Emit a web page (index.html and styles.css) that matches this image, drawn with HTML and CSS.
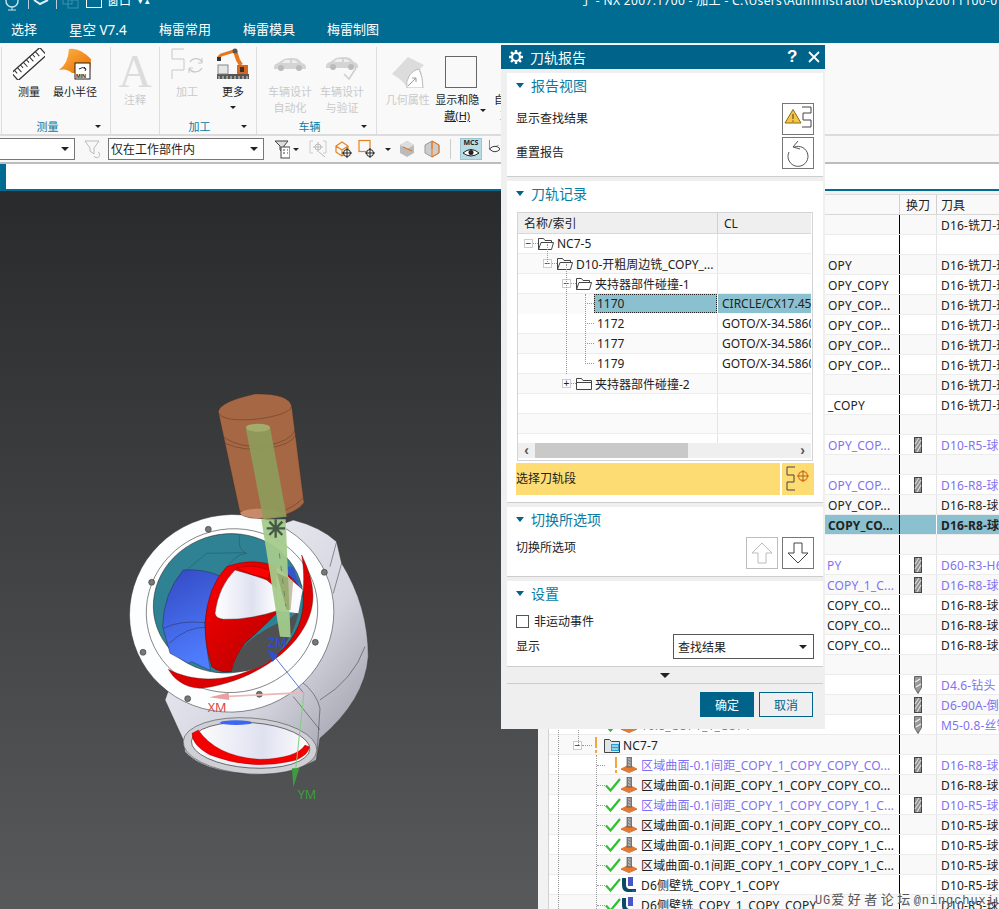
FILE: index.html
```html
<!DOCTYPE html>
<html lang="zh-CN">
<head>
<meta charset="utf-8">
<title>NX 刀轨报告</title>
<link rel="stylesheet" href="styles.css">
</head>
<body>
<svg class="defs" width="0" height="0">
  <defs>
    <symbol id="folder" viewBox="0 0 16 13"><path d="M.5 12.5V1.5h5l1.5 2h8.5v9z" fill="none" stroke="#444"/><path d="M.5 5.5h15" stroke="#444"/></symbol>
    <symbol id="folderopen" viewBox="0 0 16 13"><path d="M.5 12.5V1.5h5l1.5 2h6.5v2M.5 12.5l2.5-7h12.5l-2 7z" fill="none" stroke="#444"/></symbol>
    <symbol id="drill" viewBox="0 0 8 16"><rect x=".5" y=".5" width="7" height="15" fill="#8f8f8f" stroke="#444"/><path d="M1 12 7 3M1 7l4-6M3 15l4-7" stroke="#ddd" stroke-width="1.2"/></symbol>
    <symbol id="twist" viewBox="0 0 8 18"><path d="M.5.5h7v11l-3.500 6-3.500-6z" fill="#999" stroke="#666"/><path d="M1 6l5-3M2 11l5-3" stroke="#eee" stroke-width="1.4"/></symbol>
    <symbol id="op" viewBox="0 0 16 16"><path d="M0 11.500 8 7.500l8 4-8 4z" fill="#e9772c"/><path d="M0 11.500l8 4 8-4v1l-8 3.500-8-3.500z" fill="#a9511c"/><rect x="6" y="0" width="4.500" height="10" fill="#8a8a8a" stroke="#444" stroke-width=".6"/><path d="M7 1.500 9.500 3M7 4.500 9.500 6M7 7.500 9.500 9" stroke="#ddd" stroke-width=".7"/></symbol>
    <symbol id="wall" viewBox="0 0 16 16"><path d="M1 1h4v7q0 3 3 4h7v3H6Q1 14 1 8z" fill="#0b4a66"/><rect x="7" y="0" width="5" height="9" fill="#4a55c8"/><path d="M11 14h4" stroke="#1a6fd0"/></symbol>
    <symbol id="check" viewBox="0 0 16 16"><path d="M1 8.500 5.500 13.500 15 2" fill="none" stroke="#2fbf2f" stroke-width="2.200"/></symbol>
    <symbol id="car" viewBox="0 0 32 14"><path d="M0 10q0-3 4-4l6-4q8-2 14 0l4 4q4 1 4 4v2H0z" fill="#d4d4d4"/><circle cx="7" cy="11" r="3" fill="#bbb"/><circle cx="25" cy="11" r="3" fill="#bbb"/><path d="M11 3h5v3H8zM18 3q4 0 6 3h-6z" fill="#eee"/></symbol>
  </defs>
</svg>

<header class="appbar">
  <div class="qat">
    <svg class="qat-icons" width="110" height="14" viewBox="0 0 110 14"><circle cx="12" cy="1" r="6" fill="none" stroke="#cfe3ea" stroke-width="1.400"/><path d="M12 7v3M8 10h8" stroke="#cfe3ea"/><path d="M28.500 0v9M56.500 0v9" stroke="#bcd"/><path d="M34 0l6 4 8-4" fill="none" stroke="#dfeef3" stroke-width="2"/><rect x="63" y="-5" width="9" height="9" fill="none" stroke="#3f8fae"/><rect x="68" y="0" width="10" height="8" fill="none" stroke="#3f8fae"/><rect x="86.500" y="-4" width="15" height="11.500" fill="none" stroke="#fff"/></svg>
    <span class="qat-text">窗口</span>
    <span class="qat-arrow">▾ ▴</span>
    <span class="doc-title">丁 - NX 2007.1700 - 加工 - C:\Users\Administrator\Desktop\20011100-0</span>
  </div>
  <nav class="tabs">
    <span class="tab t1">选择</span><span class="tab t2">星空 V7.4</span><span class="tab t3">梅雷常用</span><span class="tab t3">梅雷模具</span><span class="tab t3">梅雷制图</span>
  </nav>
</header>

<section class="ribbon">
  <div class="grp g1">
    <div class="tools">
      <div class="tool w46"><svg class="ico" viewBox="0 0 32 32"><g transform="rotate(-42 16 16)"><rect x="-3" y="11" width="38" height="10" fill="#fff" stroke="#333" stroke-width="1.300"/><path d="M1 11v4M5 11v6M9 11v4M13 11v6M17 11v4M21 11v6M25 11v4M29 11v6" stroke="#333"/></g></svg><span>测量</span></div>
      <div class="tool w46"><svg class="ico" viewBox="0 0 32 32"><defs><linearGradient id="srf" x1="0" y1="0" x2="1" y2="1"><stop offset="0" stop-color="#ffb347"/><stop offset="1" stop-color="#e86f00"/></linearGradient></defs><path d="M0 22Q9 16 10 1q10-2 22 10l-1 14H13Q8 20 0 22z" fill="url(#srf)"/><rect x="16" y="15" width="15" height="16" fill="#fff" stroke="#222"/><path d="M20 21q4-3 7 0M25 19l2 2-1 2" fill="none" stroke="#222"/><text class="mintxt" x="17" y="30">MIN</text></svg><span>最小半径</span></div>
    </div>
    <div class="gl"><span>测量</span><i class="caret"></i></div>
  </div>
  <div class="grp g2">
    <div class="tools">
      <div class="tool w49 low"><span class="bigA">A</span><span class="off">注释</span></div>
    </div>
    <div class="gl none"></div>
  </div>
  <div class="grp g3">
    <div class="tools">
      <div class="tool w46 off"><svg class="ico" viewBox="0 0 32 32"><path d="M13 1H1v10h12v11H1v9" fill="none" stroke="#c8c8c8"/><path d="M19 14a7 7 0 0 1 12 0M31 20a8 8 0 0 1-13 1" fill="none" stroke="#c8c8c8" stroke-width="1.400"/><path d="M31 10v5h-4M18 25v-5h4" fill="none" stroke="#c8c8c8"/></svg><span>加工</span></div>
      <div class="tool w46"><svg class="ico" viewBox="0 0 32 32"><rect x="0" y="26" width="32" height="5" fill="#555"/><path d="M2 31v-3M6 31v-3M10 31v-3M14 31v-3M18 31v-3M22 31v-3M26 31v-3M30 31v-3" stroke="#ccc" stroke-width="1.200"/><rect x="1" y="17" width="10" height="9" fill="#e6e6e6" stroke="#888"/><path d="M1 10 4 7 17 3" fill="none" stroke="#e8761c" stroke-width="3"/><path d="M18 3l3 9 3 5" fill="none" stroke="#e8761c" stroke-width="4"/><rect x="20" y="17" width="11" height="9" fill="#d9661a"/><rect x="23" y="19" width="4" height="5" fill="#333"/><rect x="0" y="9" width="4" height="4" fill="#333"/><circle cx="18" cy="3" r="2.500" fill="#555"/></svg><span>更多</span><i class="caret"></i></div>
    </div>
    <div class="gl"><span>加工</span><i class="caret"></i></div>
  </div>
  <div class="grp g4">
    <div class="tools">
      <div class="tool w52 off"><svg class="ico car" viewBox="0 0 32 14"><use href="#car"/></svg><span>车辆设计<br>自动化</span></div>
      <div class="tool w52 off"><svg class="ico" viewBox="0 0 32 32"><use href="#car" width="32" height="14" y="8"/><path d="M18 26l5 5 7-11" fill="none" stroke="#cfcfcf" stroke-width="1.600"/></svg><span>车辆设计<br>与验证</span></div>
    </div>
    <div class="gl"><span>车辆</span><i class="caret"></i></div>
  </div>
  <div class="grp g5">
    <div class="tools">
      <div class="tool w50 low off"><svg class="ico" viewBox="0 0 32 32"><path d="M0 18 16 1l16 8-4 4q3 5 3 19H15Q12 25 0 18z" fill="#dcdcdc"/><path d="M15 32a16 16 0 0 1 12-19q4 8 4 19z" fill="#fff" stroke="#bbb"/><path d="M16 30l8-8M20 22h4v4" fill="none" stroke="#999"/></svg><span>几何属性</span></div>
      <div class="tool w50 low"><span class="sq"></span><span>显示和隐<br><span class="u">藏(H)</span></span><i class="caret side"></i></div>
      <div class="tool w24 low"><span class="sq none"></span><span>自动<br><em class="orn">工</em></span></div>
    </div>
    <div class="gl none"></div>
  </div>
</section>

<section class="selbar">
  <div class="combo c1"><i class="caret"></i></div>
  <svg class="si s1" viewBox="0 0 16 20"><path d="M1 2h14l-5 7v6l-4-3V9z" fill="none" stroke="#bbb"/><path d="M10 17a3 3 0 1 0 4-4" fill="none" stroke="#bbb"/></svg>
  <div class="combo c2"><span>仅在工作部件内</span><i class="caret"></i></div>
  <svg class="si s2" viewBox="0 0 16 20"><path d="M1 2h13l-4 5v6L6 11V7z" fill="#ddd" stroke="#444"/><rect x="7" y="8" width="9" height="11" fill="#fff" stroke="#444"/><path d="M9 11h2M9 14h2M13 11h1M13 14h1" stroke="#444"/></svg><i class="caret tiny"></i>
  <svg class="si s3" viewBox="0 0 18 20"><path d="M4 2H1v12h3M14 2h3v12h-3" fill="none" stroke="#ccc"/><circle cx="9" cy="8" r="3" fill="none" stroke="#bbb"/><path d="M9 3v10M4 8h10M10 13l6 5" stroke="#bbb"/></svg>
  <svg class="si s4" viewBox="0 0 18 20"><path d="M1 7l6-4 6 4v6l-6 4-6-4zM1 7l6 4 6-4M7 11v6" fill="none" stroke="#e8821e" stroke-width="1.200"/><circle cx="12" cy="14" r="3.500" fill="#fff" stroke="#222"/><path d="M12 9v10M7 14h10" stroke="#222"/></svg>
  <svg class="si s5" viewBox="0 0 20 20"><rect x="1" y="1.500" width="11" height="11" fill="none" stroke="#e8821e" stroke-width="1.200"/><circle cx="12" cy="14" r="3.500" fill="#fff" stroke="#222"/><path d="M12 9v10M7 14h10" stroke="#222"/></svg>
  <i class="caret tiny t5"></i>
  <svg class="si s6" viewBox="0 0 16 20"><path d="M1 6l7-4 7 4v8l-7 4-7-4z" fill="#bbb"/><path d="M1 6l7 4 7-4-7-4z" fill="#ddd"/><path d="M4 8l9 4" stroke="#e8761c" stroke-width="1.300"/></svg>
  <svg class="si s7" viewBox="0 0 16 20"><path d="M1 6l7-4 7 4v8l-7 4-7-4z" fill="#ccc" stroke="#999"/><path d="M8 2l7 4v8l-7 4z" fill="none" stroke="#e8761c"/><path d="M8 2v8" stroke="#e8761c"/></svg>
  <span class="vsep"></span>
  <div class="mcs"><span>MCS</span><svg width="18" height="11" viewBox="0 0 18 11"><path d="M1 6q8-7 16 0-8 6-16 0z" fill="#fff" stroke="#222"/><circle cx="9" cy="5.500" r="2.500" fill="#222"/></svg></div>
  <svg class="si s8" viewBox="0 0 12 22"><path d="M1 1v10l10-4" fill="none" stroke="#3a8"/><path d="M1 11q6-6 12 0-6 6-12 0z" fill="#fff" stroke="#222"/></svg>
</section>

<div class="strip"><span class="strip-tab"></span></div>

<main class="work">
  <div class="viewport">
    <svg class="model" width="538" height="718" viewBox="0 191 538 718">
      <defs>
        <linearGradient id="bodyg" x1="0" y1="0" x2="1" y2="1"><stop offset="0" stop-color="#f7f8fc"/><stop offset=".6" stop-color="#d3d4de"/><stop offset="1" stop-color="#8f919c"/></linearGradient>
        <linearGradient id="blueg" x1="0" y1="0" x2=".3" y2="1"><stop offset="0" stop-color="#3349c2"/><stop offset="1" stop-color="#4f7dff"/></linearGradient>
        <linearGradient id="redg" x1="0" y1="0" x2="1" y2="1"><stop offset="0" stop-color="#f00"/><stop offset="1" stop-color="#a80000"/></linearGradient>
        <linearGradient id="wing" x1="0" y1="0" x2="1" y2="0"><stop offset="0" stop-color="#fff"/><stop offset=".6" stop-color="#dfe1f0"/><stop offset="1" stop-color="#fff"/></linearGradient>
      </defs>
      <g transform="translate(120 380) scale(.3333)">
        <path d="M520 420Q600 440 650 485L665 550Q745 680 745 830 735 960 600 1075L590 1140Q500 1190 380 1180 250 1175 195 1115L190 1080 135 960 300 500z" fill="url(#bodyg)" stroke="#333" stroke-width="1.500"/>
        <path d="M650 485 630 560M665 550 640 640M735 800Q700 900 600 960M520 950 600 1050M600 985 590 1140M545 905Q590 940 600 985" fill="none" stroke="#333" stroke-width="1.500"/>
        <ellipse cx="390" cy="1098" rx="201" ry="84" transform="rotate(4 390 1098)" fill="#cfd0d6" stroke="#333" stroke-width="1.500"/>
        <ellipse cx="392" cy="1096" rx="178" ry="68" transform="rotate(4 392 1096)" fill="url(#wing)" stroke="#333" stroke-width="2"/>
        <path d="M216 1060Q215 1095 270 1125 400 1175 530 1140 570 1120 568 1100L555 1095Q530 1135 420 1138 290 1130 235 1050z" fill="#f40000" stroke="#600" stroke-width=".8"/>
        <ellipse cx="348" cy="1028" rx="48" ry="7" fill="#3c66f2"/>
        <ellipse cx="335" cy="700" rx="307" ry="296" transform="rotate(-12 335 700)" fill="#fdfeff" stroke="#333" stroke-width="1.500"/>
        <ellipse cx="336" cy="692" rx="258" ry="245" transform="rotate(-14 336 692)" fill="#fff" stroke="#222" stroke-width="1.500"/>
        <path d="M545 525C592 620 590 690 540 762 480 850 350 915 240 925 190 922 160 895 145 868 200 897 270 905 340 888 420 868 480 820 522 745 550 680 558 600 545 525z" fill="#dd0000" stroke="#400" stroke-width="1"/>
        <ellipse cx="325" cy="670" rx="226" ry="208" transform="rotate(-14 325 670)" fill="#2f8293" stroke="#222" stroke-width="1.500"/>
        <path d="M190 570Q250 565 305 590 262 650 255 730 258 810 272 872L215 845 205 850 150 820 128 740Q130 640 190 570z" fill="url(#blueg)" stroke="#222" stroke-width="1.200"/>
        <path d="M130 745Q180 720 255 728M148 790Q200 740 258 742" fill="none" stroke="#222" stroke-width="1.200"/>
        <path d="M360 462Q350 510 380 520 340 520 305 590M200 570 260 520 375 518M480 530 548 620" fill="none" stroke="#1a4d58" stroke-width="1.200"/>
        <path d="M520 560 545 640 470 560z" fill="#3356cc"/>
        <path d="M255 730Q262 620 320 560 400 530 470 560 540 600 545 650L470 700Q420 750 375 790 345 830 335 875 300 880 275 860 255 800 255 730z" fill="url(#redg)" stroke="#300" stroke-width="1"/>
        <path d="M285 700Q295 620 345 570 400 585 440 600L470 625 472 692Q390 720 310 718 288 716 285 700z" fill="url(#wing)" stroke="#222" stroke-width="1.200"/>
        <path d="M350 564Q400 550 450 572L445 595 400 585z" fill="#f00" stroke="#300" stroke-width=".8"/>
        <path d="M335 875Q350 800 420 760 455 735 500 720 535 700 540 680 520 790 440 850 390 880 335 875z" fill="#4f5052"/>
        <path d="M470 560 548 630 535 700 472 692 470 625z" fill="#fbfbff"/>
        <path d="M295 95Q300 65 405 42 505 40 515 78L552 368Q530 400 455 415 370 420 360 398z" fill="#ad6a45" fill-opacity=".94" stroke="#4a2c1c" stroke-width="1"/>
        <path d="M297 100Q310 125 405 118 510 105 515 78M311 172Q360 205 430 198 515 185 525 150M316 190Q370 215 440 205 515 195 526 165M358 392Q400 415 470 400 530 380 550 352" fill="none" stroke="#4a2c1c" stroke-width="1.200"/>
        <ellipse cx="420" cy="400" rx="58" ry="14" fill="#c98a6c"/>
        <path d="M378 148 430 418 500 410 450 140z" fill="#8d9c5b" fill-opacity=".92"/>
        <ellipse cx="414" cy="143" rx="36" ry="12" fill="#a4ac6c"/>
        <path d="M424 418H497L512 772 480 770z" fill="#a5cb8b" fill-opacity=".94"/>
        <path d="M470 578 500 690 512 690 520 600z" fill="#8a8a52" fill-opacity=".5"/>
        <path d="M478 520 498 680" stroke="#6d8c5c" stroke-width="3" stroke-dasharray="16 22" fill="none"/>
        <g stroke="#445a44" stroke-width="7"><path d="M440 445H495M467 418V473M448 425 487 465M448 465 487 425"/></g>
        <g fill="#777" stroke="#222" stroke-width="1.500"><circle cx="265" cy="448" r="9"/><circle cx="95" cy="607" r="9"/><circle cx="613" cy="577" r="9"/><circle cx="586" cy="787" r="9"/><circle cx="69" cy="817" r="9"/><circle cx="203" cy="956" r="9"/><circle cx="418" cy="943" r="9"/></g>
        <path d="M550 938 462 828" stroke="#5a78c8" stroke-width="3"/>
        <path d="M442 808 474 824 458 846z" fill="#2f52c8"/>
        <path d="M550 938 310 950" stroke="#f0b6b6" stroke-width="5"/>
        <path d="M268 952 326 938 328 960z" fill="#e8a0a0"/>
        <path d="M552 938 527 1170" stroke="#7ed07e" stroke-width="3"/>
        <path d="M520 1222 516 1165 538 1165z" fill="#3d9c3d"/>
        <text class="axis ax-z" x="444" y="800">ZM</text>
        <text class="axis ax-x" x="263" y="997">XM</text>
        <text class="axis ax-y" x="533" y="1256">YM</text>
      </g>
    </svg>
  </div>
  <div class="nav">
    <div class="nav-side"></div>
    <div class="navtable">
      <div class="row head"><div class="nm"></div><div class="chg">换刀</div><div class="tl">刀具</div></div>
      <div class="body">
        <div class="row"><div class="nm"></div><div class="chg"></div><div class="tl">D16-铣刀-球头</div></div>
        <div class="row"><div class="nm"></div><div class="chg"></div><div class="tl"></div></div>
        <div class="row"><div class="nm tail">OPY</div><div class="chg"></div><div class="tl">D16-铣刀-球头</div></div>
        <div class="row"><div class="nm tail">OPY_COPY</div><div class="chg"></div><div class="tl">D16-铣刀-球头</div></div>
        <div class="row"><div class="nm tail">OPY_COP...</div><div class="chg"></div><div class="tl">D16-铣刀-球头</div></div>
        <div class="row"><div class="nm tail">OPY_COP...</div><div class="chg"></div><div class="tl">D16-铣刀-球头</div></div>
        <div class="row"><div class="nm tail">OPY_COP...</div><div class="chg"></div><div class="tl">D16-铣刀-球头</div></div>
        <div class="row"><div class="nm tail">OPY_COP...</div><div class="chg"></div><div class="tl">D16-铣刀-球头</div></div>
        <div class="row"><div class="nm"></div><div class="chg"></div><div class="tl">D16-铣刀-球头</div></div>
        <div class="row"><div class="nm tail">_COPY</div><div class="chg"></div><div class="tl">D16-铣刀-球头</div></div>
        <div class="row"><div class="nm"></div><div class="chg"></div><div class="tl"></div></div>
        <div class="row blue"><div class="nm tail">OPY_COP...</div><div class="chg"><svg class="dr"><use href="#drill"/></svg></div><div class="tl">D10-R5-球头</div></div>
        <div class="row"><div class="nm"></div><div class="chg"></div><div class="tl"></div></div>
        <div class="row blue"><div class="nm tail">OPY_COP...</div><div class="chg"><svg class="dr"><use href="#drill"/></svg></div><div class="tl">D16-R8-球头</div></div>
        <div class="row"><div class="nm tail">OPY_COP...</div><div class="chg"></div><div class="tl">D16-R8-球头</div></div>
        <div class="row sel"><div class="nm tail">COPY_CO...</div><div class="chg"></div><div class="tl">D16-R8-球头</div></div>
        <div class="row"><div class="nm"></div><div class="chg"></div><div class="tl"></div></div>
        <div class="row blue"><div class="nm tail near">PY</div><div class="chg"><svg class="dr"><use href="#drill"/></svg></div><div class="tl">D60-R3-H6</div></div>
        <div class="row blue"><div class="nm tail near">COPY_1_C...</div><div class="chg"><svg class="dr"><use href="#drill"/></svg></div><div class="tl">D16-R8-球头</div></div>
        <div class="row"><div class="nm tail near">COPY_CO...</div><div class="chg"></div><div class="tl">D16-R8-球头</div></div>
        <div class="row"><div class="nm tail near">COPY_CO...</div><div class="chg"></div><div class="tl">D16-R8-球头</div></div>
        <div class="row"><div class="nm tail near">COPY_CO...</div><div class="chg"></div><div class="tl">D16-R8-球头</div></div>
        <div class="row"><div class="nm"></div><div class="chg"></div><div class="tl"></div></div>
        <div class="row blue"><div class="nm"></div><div class="chg"><svg class="dr"><use href="#twist"/></svg></div><div class="tl">D4.6-钻头</div></div>
        <div class="row blue"><div class="nm"></div><div class="chg"><svg class="dr"><use href="#drill"/></svg></div><div class="tl">D6-90A-倒角</div></div>
        <div class="row blue"><div class="nm op"><span class="ind"></span><span class="dots"></span><span class="st"><svg class="ck"><use href="#check"/></svg></span><svg class="opi"><use href="#op"/></svg><span class="tx">T6.8_COPY_1_COPY</span></div><div class="chg"><svg class="dr"><use href="#twist"/></svg></div><div class="tl">M5-0.8-丝锥</div></div>
        <div class="row"><div class="nm nc"><span class="bx">−</span><span class="dots"></span><span class="warn"></span><svg class="fld" viewBox="0 0 16 15"><path d="M.5 14.500V1.500h5l2 2h8v11z" fill="#dfe5e8" stroke="#444"/><rect x="7" y="6" width="8" height="7" fill="#2a9fd0"/><path d="M8 8h6M8 11h6" stroke="#fff"/></svg><span class="tx">NC7-7</span></div><div class="chg"></div><div class="tl"></div></div>
        <div class="row blue"><div class="nm op"><span class="ind"></span><span class="dots"></span><span class="st"><span class="warn"></span></span><svg class="opi"><use href="#op"/></svg><span class="tx">区域曲面-0.1间距_COPY_1_COPY_COPY_CO...</span></div><div class="chg"><svg class="dr"><use href="#drill"/></svg></div><div class="tl">D16-R8-球头</div></div>
        <div class="row"><div class="nm op"><span class="ind"></span><span class="dots"></span><span class="st"><svg class="ck"><use href="#check"/></svg></span><svg class="opi"><use href="#op"/></svg><span class="tx">区域曲面-0.1间距_COPY_1_COPY_COPY_CO...</span></div><div class="chg"></div><div class="tl">D16-R8-球头</div></div>
        <div class="row blue"><div class="nm op"><span class="ind"></span><span class="dots"></span><span class="st"><svg class="ck"><use href="#check"/></svg></span><svg class="opi"><use href="#op"/></svg><span class="tx">区域曲面-0.1间距_COPY_1_COPY_COPY_1_C...</span></div><div class="chg"><svg class="dr"><use href="#drill"/></svg></div><div class="tl">D10-R5-球头</div></div>
        <div class="row"><div class="nm op"><span class="ind"></span><span class="dots"></span><span class="st"><svg class="ck"><use href="#check"/></svg></span><svg class="opi"><use href="#op"/></svg><span class="tx">区域曲面-0.1间距_COPY_1_COPY_COPY_CO...</span></div><div class="chg"></div><div class="tl">D10-R5-球头</div></div>
        <div class="row"><div class="nm op"><span class="ind"></span><span class="dots"></span><span class="st"><svg class="ck"><use href="#check"/></svg></span><svg class="opi"><use href="#op"/></svg><span class="tx">区域曲面-0.1间距_COPY_1_COPY_COPY_1_C...</span></div><div class="chg"></div><div class="tl">D10-R5-球头</div></div>
        <div class="row"><div class="nm op"><span class="ind"></span><span class="dots"></span><span class="st"><svg class="ck"><use href="#check"/></svg></span><svg class="opi"><use href="#op"/></svg><span class="tx">区域曲面-0.1间距_COPY_1_COPY_COPY_1_C...</span></div><div class="chg"></div><div class="tl">D10-R5-球头</div></div>
        <div class="row"><div class="nm op"><span class="ind"></span><span class="dots"></span><span class="st"><svg class="ck"><use href="#check"/></svg></span><svg class="opi"><use href="#wall"/></svg><span class="tx">D6侧壁铣_COPY_1_COPY</span></div><div class="chg"></div><div class="tl">D10-R5-球头</div></div>
        <div class="row"><div class="nm op"><span class="ind"></span><span class="dots"></span><span class="st"><svg class="ck"><use href="#check"/></svg></span><svg class="opi"><use href="#wall"/></svg><span class="tx">D6侧壁铣_COPY_1_COPY_COPY</span></div><div class="chg"></div><div class="tl">D10-R5-球头</div></div>
        <span class="guide g-a"></span><span class="guide g-b"></span><span class="guide g-c"></span>
      </div>
    </div>
  </div>
</main>

<aside class="dialog">
  <div class="dlg-title">
    <svg class="gear" width="16" height="16" viewBox="0 0 16 16"><path d="M8 1v2.500M8 12.500V15M1 8h2.500M12.500 8H15M3 3l1.800 1.800M11.200 11.200 13 13M3 13l1.800-1.800M11.200 4.800 13 3" stroke="#fff" stroke-width="2.400"/><circle cx="8" cy="8" r="4" fill="none" stroke="#fff" stroke-width="2.200"/></svg>
    <span class="dlg-name">刀轨报告</span>
    <span class="dlg-q">?</span>
    <svg width="12" height="12" viewBox="0 0 12 12"><path d="M1 1l10 10M11 1 1 11" stroke="#fff" stroke-width="1.800"/></svg>
  </div>
  <div class="dlg-body">
    <section class="sec">
      <h3 class="sec-h">报告视图</h3>
      <div class="frow"><span>显示查找结果</span>
        <button class="ibtn" type="button"><svg width="30" height="30" viewBox="0 0 30 30"><path d="M10 5.500 18 19H2z" fill="#f5c543" stroke="#8a6a10"/><path d="M10 10v5M10 16.500v1.300" stroke="#533"/><path d="M19 3h9v6h-8v7h8v7h-9" fill="none" stroke="#444"/></svg></button></div>
      <div class="frow"><span>重置报告</span>
        <button class="ibtn" type="button"><svg width="30" height="30" viewBox="0 0 30 30"><path d="M11 8.200A10 10 0 1 1 6 13" fill="none" stroke="#555" transform="translate(0 1)"/><path d="M15 3l-5 6 7 2" fill="none" stroke="#555"/></svg></button></div>
    </section>
    <section class="sec">
      <h3 class="sec-h mb5">刀轨记录</h3>
      <div class="dtable">
        <div class="drow dhead"><div class="dn">名称/索引</div><div class="dc">CL</div></div>
        <div class="dbody">
          <div class="drow"><div class="dn l0"><span class="bx">−</span><span class="dots d4"></span><svg class="df"><use href="#folderopen"/></svg><span>NC7-5</span></div><div class="dc"></div></div>
          <div class="drow"><div class="dn l1"><span class="bx">−</span><span class="dots d4"></span><svg class="df"><use href="#folderopen"/></svg><span>D10-开粗周边铣_COPY_...</span></div><div class="dc"></div></div>
          <div class="drow"><div class="dn l2"><span class="bx">−</span><span class="dots d4"></span><svg class="df"><use href="#folderopen"/></svg><span>夹持器部件碰撞-1</span></div><div class="dc"></div></div>
          <div class="drow on"><div class="dn l3"><span class="dots d8"></span><span class="idx">1170</span></div><div class="dc">CIRCLE/CX17.4530</div></div>
          <div class="drow"><div class="dn l3"><span class="dots d8"></span><span class="idx">1172</span></div><div class="dc">GOTO/X-34.5860</div></div>
          <div class="drow"><div class="dn l3"><span class="dots d8"></span><span class="idx">1177</span></div><div class="dc">GOTO/X-34.5860</div></div>
          <div class="drow"><div class="dn l3"><span class="dots d8"></span><span class="idx">1179</span></div><div class="dc">GOTO/X-34.5860</div></div>
          <div class="drow"><div class="dn l2"><span class="bx">+</span><span class="dots d4"></span><svg class="df"><use href="#folder"/></svg><span>夹持器部件碰撞-2</span></div><div class="dc"></div></div>
          <div class="drow"><div class="dn"></div><div class="dc"></div></div>
          <div class="drow"><div class="dn"></div><div class="dc"></div></div>
          <div class="drow"><div class="dn"></div><div class="dc"></div></div>
          <span class="guide dg1"></span><span class="guide dg2"></span><span class="guide dg3"></span>
        </div>
        <div class="hscroll"><span class="arr">‹</span><span class="track"><span class="thumb"></span></span><span class="arr">›</span></div>
      </div>
      <div class="pick"><div class="pick-l"><span>选择刀轨段</span></div><div class="pick-r"><svg width="30" height="30" viewBox="0 0 30 30"><path d="M12 3H4v8h7v7H4v8h8" fill="none" stroke="#444"/><circle cx="20" cy="12" r="4.500" fill="none" stroke="#e8761c" stroke-width="1.300"/><path d="M14 12h12M20 6v12" stroke="#a5651f"/></svg></div></div>
    </section>
    <section class="sec">
      <h3 class="sec-h">切换所选项</h3>
      <div class="frow top"><span>切换所选项</span>
        <div class="pair">
          <button class="ibtn dim" type="button"><svg width="30" height="30" viewBox="0 0 30 30"><path d="M15 5 5 15h6v10h8V15h6z" fill="none" stroke="#bbb"/></svg></button>
          <button class="ibtn" type="button"><svg width="30" height="30" viewBox="0 0 30 30"><path d="M15 25 5 15h6V5h8v10h6z" fill="none" stroke="#444"/></svg></button>
        </div></div>
    </section>
    <section class="sec">
      <h3 class="sec-h">设置</h3>
      <label class="chk"><span class="box"></span>非运动事件</label>
      <div class="frow sel-row"><span>显示</span><div class="select"><span>查找结果</span><i class="caret"></i></div></div>
    </section>
  </div>
  <div class="more"><i class="caret wide"></i></div>
  <div class="foot"><button class="btn pri" type="button">确定</button><button class="btn" type="button">取消</button></div>
</aside>

<div class="watermark">UG<span class="wm-cjk">爱好者论坛</span>@ningchuxiu</div>
</body>
</html>
```

FILE: styles.css
```css
* { box-sizing: border-box; }
html, body { margin: 0; padding: 0; }
body {
  width: 999px; height: 909px; overflow: hidden; position: relative;
  font-family: "Noto Sans", "Noto Sans CJK SC", sans-serif;
  font-size: 12px; color: #222; background: #fff;
}
.defs { position: absolute; }
button { font: inherit; }

/* app bar */
.appbar { background: #006c92; height: 43px; color: #fff; }
.qat { height: 14px; display: flex; align-items: flex-end; overflow: hidden; position: relative; font-size: 12px; }
.qat-icons { flex: none; align-self: flex-start; }
.qat-text { line-height: 12px; padding-bottom: 7px; margin-left: -3px; width: 27px; flex: none; }
.qat-arrow { line-height: 12px; padding-bottom: 7px; font-size: 9px; width: 443px; padding-left: 4px; flex: none; }
.doc-title { line-height: 12px; padding-bottom: 7px; white-space: nowrap; font-size: 12px; margin-left: 3px; letter-spacing: .35px; }
.tabs { display: flex; height: 29px; align-items: center; font-size: 13px; padding-left: 11px; }
.tab { white-space: nowrap; }
.t1 { width: 58px; }
.t2 { width: 90px; font-size: 13.500px; }
.t3 { width: 84px; }

/* ribbon */
.ribbon { display: flex; height: 93px; background: #f9f9f9; border-bottom: 2px solid #dcdcdc; padding-left: 1px; overflow: hidden; }
.grp { display: flex; flex-direction: column; border-left: 1px solid #dedede; margin: 4px 0 0; }
.g1 { width: 109px; padding-left: 4px; }
.g2 { width: 49px; }
.g3 { width: 97px; padding-left: 4px; }
.g4 { width: 120px; padding-left: 7px; }
.g5 { width: 130px; padding-left: 6px; }
.tools { display: flex; flex: 1; min-height: 0; }
.tool { position: relative; display: flex; flex-direction: column; align-items: center; font-size: 11px; line-height: 16px; text-align: center; padding-top: 1px; white-space: nowrap; }
.tool.low { padding-top: 9px; }
.tool .caret { margin-top: 6px; border-left-width: 3px; border-right-width: 3px; border-top-width: 3px; }
.tool .caret.side { position: absolute; right: -4px; top: 62px; margin: 0; }
.w46 { width: 46px; } .w49 { width: 49px; } .w50 { width: 50px; } .w52 { width: 52px; } .w24 { width: 24px; align-items: flex-start; padding-left: 12px; }
.ico { width: 32px; height: 32px; margin-bottom: 4px; flex: none; }
.ico.car { height: 14px; margin-top: 9px; margin-bottom: 13px; }
.off { color: #c9c9c9; }
.bigA { font-family: "Liberation Serif", serif; font-size: 46px; line-height: 32px; height: 32px; color: #dcdcdc; margin-bottom: 4px; flex: none; }
.mintxt { font-size: 5.500px; font-weight: 700; font-family: "Liberation Sans", sans-serif; fill: #222; }
.sq { display: block; width: 32px; height: 32px; border: 1px solid #666; margin: 0 0 4px 8px; flex: none; }
.sq.none { border: 0; margin-left: 0; }
.u { text-decoration: underline; text-decoration-thickness: 1px; }
.orn { color: #e8a030; font-style: normal; }
.gl { display: flex; align-items: center; height: 16px; flex: none; color: #0a7ba3; font-size: 11px; }
.gl span { flex: 1; text-align: center; }
.gl .caret { margin: 0 9px 0 6px; border-left-width: 3px; border-right-width: 3px; border-top-width: 3px; }
.gl.none { visibility: hidden; }
.caret { display: inline-block; width: 0; height: 0; border-left: 4px solid transparent; border-right: 4px solid transparent; border-top: 4px solid #222; flex: none; }

/* selection bar */
.selbar { height: 28px; display: flex; align-items: center; background: #f8f8f8; border-bottom: 2px solid #bdbdbd; overflow: hidden; }
.combo { height: 22px; border: 1px solid #777; background: #fff; display: flex; align-items: center; justify-content: space-between; padding: 0 5px 0 2px; flex: none; font-size: 12px; }
.c1 { width: 75px; border-left: 0; justify-content: flex-end; }
.c2 { width: 156px; margin-left: 8px; }
.si { height: 20px; flex: none; }
.s1 { width: 16px; margin-left: 9px; margin-right: 0; }
.s1 + .combo { margin-left: 8px; }
.s2 { width: 16px; margin-left: 10px; }
.tiny { margin-left: 3px; border-left-width: 3px; border-right-width: 3px; border-top-width: 3px; }
.s3 { width: 18px; margin-left: 10px; }
.s4 { width: 18px; margin-left: 8px; }
.s5 { width: 20px; margin-left: 5px; }
.t5 { margin-left: 7px; }
.s6 { width: 16px; margin-left: 8px; }
.s7 { width: 16px; margin-left: 9px; }
.vsep { width: 1px; height: 20px; background: #ccc; margin: 0 9px 0 10px; flex: none; }
.mcs { width: 22px; height: 22px; background: #b9dbe4; border: 1px solid #9cc4d0; display: flex; flex-direction: column; align-items: center; font-size: 7px; line-height: 8px; font-weight: 700; flex: none; }
.s8 { width: 12px; margin-left: 6px; }

.strip { height: 27px; background: #fff; border-bottom: 2px solid #006c92; }
.strip-tab { display: block; width: 6px; height: 25px; background: #006c92; }

/* work area */
.work { display: flex; height: 718px; }
.viewport { width: 538px; flex: none; background: linear-gradient(#292a2c, #58595b); overflow: hidden; }
.model { display: block; }
.axis { font-size: 38px; font-family: "Noto Sans", sans-serif; }
.ax-z { fill: #2a4fd8; }
.ax-x { fill: #d84848; }
.ax-y { fill: #3d9c3d; }

.nav { flex: 1; display: flex; background: #f2f2f2; padding-top: 3px; min-width: 0; }
.nav-side { width: 11px; flex: none; background: #f2f2f2; border-right: 1px solid #d0d0d0; }
.navtable { flex: 1; min-width: 0; display: flex; flex-direction: column; background: #fff; border-top: 1px solid #dcdcdc; }
.body { position: relative; flex: 1; overflow: hidden; }
.row { display: flex; height: 20px; align-items: stretch; background: #fff; border-bottom: 1px solid #ececec; white-space: nowrap; letter-spacing: .15px; }
.row:nth-child(odd) { background: #f9f9f9; }
.body .row > .nm, .body .row > .tl { padding-top: 1px; }
.head { height: 20px; background: #efefef; border-bottom: 1px solid #d8d8d8; letter-spacing: 0; }
.nm { width: 350px; flex: none; display: flex; align-items: center; overflow: hidden; }
.chg { width: 38px; flex: none; display: flex; align-items: center; justify-content: center; border-left: 1px solid #000; border-right: 1px solid #e4e4e4; }
.head .chg { border-left: 1px solid #d0d0d0; border-right: 1px solid #d0d0d0; }
.tl { flex: 1; min-width: 0; padding-left: 4px; display: flex; align-items: center; overflow: hidden; }
.tail { padding-left: 279px; }
.near { padding-left: 278px; }
.blue { color: #7f72f0; }
.sel { background: #8ac0d0 !important; font-weight: 700; }
.sel .chg { border-left-color: #000; border-right: 1px solid #fff; }
.dr { width: 8px; height: 18px; }
.op, .nc { position: relative; }
.ind { width: 48px; flex: none; }
.dots { display: block; flex: none; width: 8px; height: 1px; border-top: 1px dotted #999; }
.st { width: 16px; flex: none; display: flex; justify-content: flex-end; align-items: center; }
.ck { width: 16px; height: 16px; }
.opi { width: 16px; height: 16px; flex: none; }
.op .tx { margin-left: 4px; }
.warn { display: block; width: 2px; height: 16px; flex: none; background: linear-gradient(#f5a53a 70%, transparent 70%, transparent 82%, #f5a53a 82%); margin-right: 4px; }
.nc { padding-left: 24px; }
.nc .dots { width: 10px; }
.nc .warn { margin: 0 7px 0 3px; }
.fld { width: 16px; height: 15px; flex: none; margin-right: 3px; }
.bx { display: block; width: 9px; height: 9px; border: 1px solid #ccc; background: #fff; font-size: 10px; line-height: 7px; text-align: center; color: #222; flex: none; font-family: "Liberation Sans", sans-serif; }
.guide { position: absolute; border-left: 1px dotted #999; width: 0; }
.g-a { left: 9px; top: 0; bottom: 0; }
.g-b { left: 29px; top: 0; height: 530px; }
.g-c { left: 47px; top: 540px; bottom: 0; }
.g-c, .g-b, .g-a { z-index: 1; }

/* dialog */
.dialog { position: absolute; left: 501px; top: 45px; width: 324px; height: 684px; background: #efefef; display: flex; flex-direction: column; z-index: 5; }
.dlg-title { height: 24px; background: #00638a; color: #fff; display: flex; align-items: center; padding: 0 5px 0 7px; font-size: 14px; flex: none; }
.dlg-name { flex: 1; margin-left: 6px; }
.dlg-q { font-weight: 700; font-size: 17px; width: 21px; font-family: "Liberation Sans", sans-serif; }
.dlg-body { padding: 4px 2px 0 6px; display: flex; flex-direction: column; gap: 4px; }
.sec { background: #fff; padding: 0 9px 7px; border-bottom: 1px solid #cdcdcd; }
.sec-h { margin: 0 0 4px; height: 26px; line-height: 26px; font-size: 14px; font-weight: 400; color: #0a7ba3; padding-left: 15px; position: relative; }
.sec-h.mb5 { margin-bottom: 5px; }
.sec-h::before { content: ""; position: absolute; left: 0; top: 10px; border-left: 4px solid transparent; border-right: 4px solid transparent; border-top: 5px solid #00638a; }
.frow { display: flex; align-items: center; justify-content: space-between; height: 32px; }
.frow > span { padding-bottom: 2px; }
.frow + .frow { margin-top: 2px; }
.frow.top { align-items: flex-start; line-height: 22px; }
.frow.top > span { padding-bottom: 0; }
.ibtn { width: 32px; height: 32px; padding: 0; border: 1px solid #777; background: #fff; display: flex; align-items: center; justify-content: center; }
.ibtn.dim { border-color: #bdbdbd; }
.pair { display: flex; gap: 4px; }
.dtable { border: 1px solid #d4d4d4; height: 249px; display: flex; flex-direction: column; padding: 0 1px 2px 0; margin-right: 1px; margin-left: 1px; }
.drow { display: flex; height: 20px; flex: none; border-bottom: 1px solid #ececec; background: #fff; white-space: nowrap; }
.dbody .drow:nth-child(odd) { background: #fff; }
.dbody .drow:nth-child(even) { background: #fafafa; }
.dhead { height: 21px; background: #efefef; border-bottom: 1px solid #d8d8d8; }
.dn { width: 200px; flex: none; display: flex; align-items: center; border-right: 1px solid #e4e4e4; overflow: hidden; }
.dhead .dn { padding-left: 6px; border-right: 1px solid #d0d0d0; }
.dc { flex: 1; min-width: 0; display: flex; align-items: center; padding-left: 4px; overflow: hidden; }
.dhead .dc { padding-left: 6px; }
.dbody { position: relative; height: 209px; overflow: hidden; flex: none; }
.df { width: 16px; height: 13px; flex: none; margin-right: 3px; }
.d4 { width: 5px; }
.d8 { width: 9px; }
.l0 { padding-left: 6px; }
.l1 { padding-left: 25px; }
.l2 { padding-left: 44px; }
.l3 { padding-left: 67px; }
.idx { flex: 1; padding-left: 3px; height: 100%; display: flex; align-items: center; }
.drow.on { border-bottom-color: transparent; }
.on .dn { border-right-color: #fff; }
.on .idx { background: #8ac0d0; outline: 1px dotted #222; outline-offset: -1px; }
.on .dc { background: #8ac0d0; }
.dg1 { left: 29px; top: 10px; height: 20px; }
.dg2 { left: 48px; top: 30px; height: 110px; }
.dg3 { left: 67px; top: 60px; height: 70px; }
.hscroll { height: 15px; display: flex; align-items: center; background: #efefef; flex: none; }
.arr { width: 17px; text-align: center; font-size: 14px; line-height: 15px; font-weight: 700; color: #555; flex: none; font-family: "Liberation Sans", sans-serif; }
.track { flex: 1; height: 15px; }
.thumb { display: block; width: 153px; height: 15px; background: #c9c9c9; }
.pick { display: flex; gap: 2px; margin-top: 2px; }
.pick-l { flex: 1; height: 32px; background: #fddc74; display: flex; align-items: center; padding-bottom: 2px; }
.pick-r { width: 32px; height: 32px; background: #fddc74; display: flex; align-items: center; justify-content: center; }
.chk { display: flex; align-items: center; height: 20px; }
.box { width: 13px; height: 13px; border: 1px solid #555; margin-right: 5px; background: #fff; }
.sel-row { height: 25px; margin-top: 3px; }
.select { width: 141px; height: 25px; border: 1px solid #555; display: flex; align-items: center; justify-content: space-between; padding: 0 6px 0 4px; }
.more { height: 17px; border-bottom: 1px solid #cdcdcd; margin: 0 2px 0 6px; display: flex; align-items: center; justify-content: center; flex: none; }
.caret.wide { border-left-width: 5px; border-right-width: 5px; border-top-width: 5px; }
.foot { display: flex; justify-content: flex-end; gap: 5px; padding: 8px 12px 0 0; }
.btn { width: 54px; height: 25px; padding: 0; background: #efefef; border: 1px solid #00638a; color: #00638a; font-size: 12px; }
.btn.pri { background: #00638a; color: #fff; }

.watermark { position: absolute; left: 815px; top: 889px; font-family: "Liberation Mono", "Noto Sans CJK SC", monospace; font-size: 12px; letter-spacing: .9px; color: #555; white-space: nowrap; z-index: 6; text-shadow: 0 0 1px #fff; }
.wm-cjk { font-size: 13px; letter-spacing: 3.500px; font-family: "Noto Sans CJK SC", sans-serif; }
```
